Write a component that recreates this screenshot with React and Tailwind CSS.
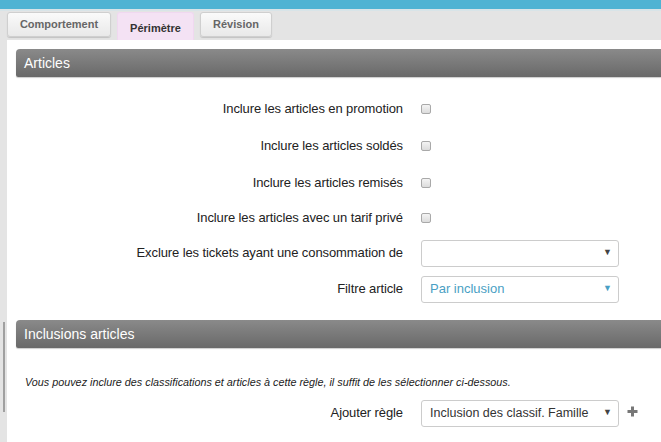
import React from 'react';

function Tab({ label, active }) {
  return active ? (
    <div className="flex h-[28px] w-[77px] items-start justify-center self-end rounded-t-[3px] border border-b-0 border-[#f0d8f0] bg-[#f4e2f4] pt-[7px] text-[11px] font-bold text-[#333]">
      {label}
    </div>
  ) : (
    <div className="flex h-[25px] items-center justify-center rounded-[3px] border border-[#cfcfcf] bg-gradient-to-b from-[#fafafa] to-[#e9e9e9] text-[11px] font-bold text-[#666] shadow-[0_1px_1px_rgba(0,0,0,0.15)]" style={{ width: label === 'Comportement' ? 104 : 72 }}>
      {label}
    </div>
  );
}

function SectionHeader({ title }) {
  return (
    <div className="flex h-[28px] items-center rounded-tl-[4px] rounded-bl-[2px] bg-gradient-to-b from-[#8a8a8a] to-[#696969] pl-[8px] text-[14px] text-white shadow-[0_1px_1px_rgba(0,0,0,0.2)]">
      {title}
    </div>
  );
}

function Checkbox() {
  return <span className="block h-[10px] w-[10px] rounded-[2px] border border-[#a9a9a9] bg-gradient-to-b from-[#f4f4f4] to-[#dcdcdc]" />;
}

function Select({ value, blue }) {
  return (
    <div className="flex h-[27px] w-[198px] items-center justify-between rounded-[3px] border border-[#cccccc] bg-white pl-[8px] pr-[6px]">
      <span className={blue ? 'text-[13px] text-[#4a9fc4]' : 'text-[12.5px] text-[#333]'}>{value}</span>
      <span className={blue ? 'text-[9px] text-[#4a9fc4]' : 'text-[9px] text-[#444]'}>▼</span>
    </div>
  );
}

function Row({ label, children, h }) {
  return (
    <div className="flex items-center" style={{ height: h }}>
      <div className="w-[387px] text-right text-[13px] tracking-[-0.1px] text-[#222]">{label}</div>
      <div className="ml-[18px] flex items-center">{children}</div>
    </div>
  );
}

export default function App() {
  return (
    <div className="flex h-[442px] w-[661px] flex-col overflow-hidden bg-[#e4e4e4]" style={{ fontFamily: '"Liberation Sans", Arial, sans-serif' }}>
      <div className="h-[9px] bg-[#4fb3d3]" />
      <div className="h-[2px] bg-[#d8e4e8]" />
      {/* Tabs */}
      <div className="flex h-[29px] items-start gap-[6px] pl-[7px] pt-[1px]">
        <Tab label="Comportement" />
        <Tab label="Périmètre" active />
        <Tab label="Révision" />
      </div>
      <div className="flex flex-1">
        <div className="relative w-[7px]">
          <div className="absolute left-[3px] top-[282px] h-[90px] w-[2px] border-x border-[#a0a0a0]" />
        </div>
        <div className="flex-1 bg-white pl-[9px] pt-[9px]">
          <SectionHeader title="Articles" />
          <div className="pt-[13px]">
            <Row label="Inclure les articles en promotion" h={37}><Checkbox /></Row>
            <Row label="Inclure les articles soldés" h={37}><Checkbox /></Row>
            <Row label="Inclure les articles remisés" h={37}><Checkbox /></Row>
            <Row label="Inclure les articles avec un tarif privé" h={34}><Checkbox /></Row>
            <Row label="Exclure les tickets ayant une consommation de" h={36}><Select value="" /></Row>
            <Row label="Filtre article" h={36}><Select value="Par inclusion" blue /></Row>
          </div>
          <div className="pt-[13px]">
            <SectionHeader title="Inclusions articles" />
          </div>
          <div className="pl-[9px] pt-[26px] text-[10.8px] italic text-[#222]">
            Vous pouvez inclure des classifications et articles à cette règle, il suffit de les sélectionner ci-dessous.
          </div>
          <div className="pt-[10px]">
            <Row label="Ajouter règle" h={26}>
              <Select value="Inclusion des classif. Famille" />
              <svg className="ml-[8px] mb-[4px]" width="11" height="11" viewBox="0 0 11 11">
                <path d="M5.5 0.5v10M0.5 5.5h10" stroke="#777" strokeWidth="3" />
              </svg>
            </Row>
          </div>
        </div>
      </div>
    </div>
  );
}
